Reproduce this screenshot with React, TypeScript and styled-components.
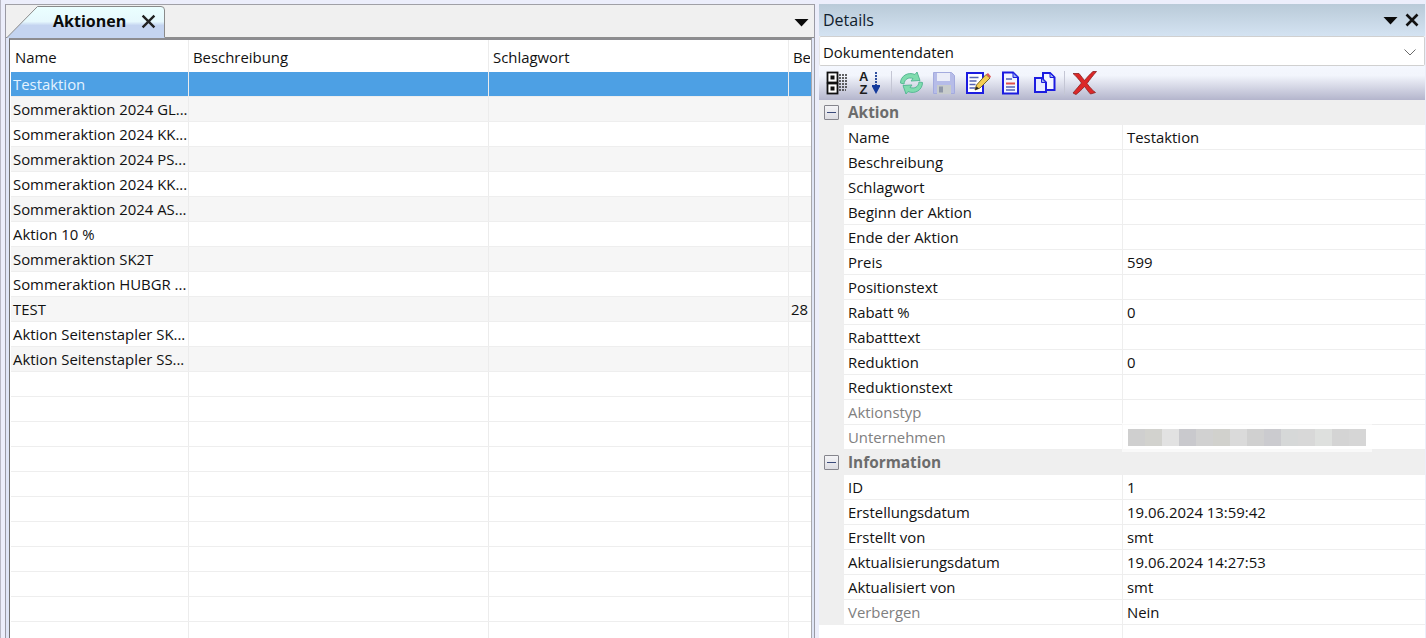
import React from "react";
import styled, { createGlobalStyle } from "styled-components";

const Global = createGlobalStyle`
  html, body { margin: 0; padding: 0; height: 100%; overflow: hidden; background: #eceefb; }
  #root { height: 638px; }
  * { box-sizing: border-box; }
`;

const FONT = `"Open Sans", "Noto Sans", "Liberation Sans", sans-serif`;

const Page = styled.div`
  width: 1426px;
  height: 638px;
  display: flex;
  overflow: hidden;
  padding: 4px 1px 0 0;
  font-family: ${FONT};
  font-size: 14.9px;
  color: #111;
  background: #eceefb;
  border-left: 1px solid #b8b8c4;
`;

const LeftOuter = styled.section`
  width: 810px;
  margin-left: 4px;
  flex: none;
  display: flex;
  flex-direction: column;
  border-top: 1px solid #a0a0a6;
  border-left: 1px solid #9a9aa4;
  border-right: 1px solid #9a9aa4;
  background: #dfe5f6;
`;

const TabStrip = styled.div`
  height: 33px;
  flex: none;
  display: flex;
  align-items: flex-end;
  justify-content: space-between;
  background: #f0f0f0;
  border-bottom: 1px solid #8e8e8e;
  padding: 0 5px 0 1px;
`;

const Tab = styled.div`
  position: relative;
  width: 158px;
  height: 33px;
  margin-bottom: -1px;
  display: flex;
  align-items: center;
  gap: 15px;
  padding: 0 0 1px 46px;
  font-size: 16px;
  font-weight: 700;
  color: #0b0b0b;
`;

const TabShape = styled.svg`
  position: absolute;
  inset: 0;
  z-index: 0;
`;

const TabLabel = styled.span`
  position: relative;
  z-index: 1;
`;

const TabClose = styled.svg`
  position: relative;
  z-index: 1;
  flex: none;
`;

const StripMenu = styled.svg`
  flex: none;
  margin-bottom: 10px;
`;

const GridFrame = styled.div`
  flex: 1;
  min-height: 0;
  margin: 0 2px 0 3px;
  padding-left: 1px;
  background: #fff;
  border-top: 2px solid #8c8c90;
  border-left: 1px solid #707070;
  border-right: 1px solid #a8a8ae;
  overflow: hidden;
`;

const Row = styled.div<{ $head?: boolean; $sel?: boolean; $alt?: boolean }>`
  display: grid;
  grid-template-columns: 178px 300px 300px 21px;
  height: ${(p) => (p.$head ? "32px" : "25px")};
  background: ${(p) => (p.$sel ? "#4da0e4" : p.$alt ? "#f6f6f6" : "#fff")};
  color: ${(p) => (p.$sel ? "#e4f3ff" : "#111")};
  border-bottom: ${(p) => (p.$head ? "none" : "1px solid #eeeeee")};
`;

const Cell = styled.div<{ $head?: boolean }>`
  display: flex;
  align-items: center;
  white-space: nowrap;
  overflow: hidden;
  padding-left: ${(p) => (p.$head ? "4px" : "2px")};
  padding-top: ${(p) => (p.$head ? "2px" : "0")};
  border-right: 1px solid #ececec;
  &:last-child { border-right: none; }
`;

const RightPanel = styled.section`
  width: 606px;
  margin-left: 4px;
  flex: none;
  display: flex;
  flex-direction: column;
  background: #fff;
`;

const TitleBar = styled.div`
  height: 32px;
  flex: none;
  display: flex;
  align-items: center;
  justify-content: space-between;
  padding: 0 6px 0 4px;
  font-size: 16px;
  color: #10202c;
  background: linear-gradient(#b9cad8, #d4e3f2);
`;

const TitleIcons = styled.div`
  display: flex;
  align-items: center;
  gap: 7px;
`;

const Combo = styled.div`
  height: 30px;
  flex: none;
  display: flex;
  align-items: center;
  justify-content: space-between;
  padding: 2px 8px 0 3px;
  background: #fff;
  border: 1px solid #d0d0d0;
  border-left-color: #e6e6e6;
  border-radius: 2px;
  color: #111;
`;

const Toolbar = styled.div`
  height: 34px;
  flex: none;
  display: flex;
  align-items: center;
  padding-left: 7px;
  background: linear-gradient(#f4f7fe 0, #f2f5fc 28%, #b4b5cc 100%);
`;

const ToolIcon = styled.svg<{ $gap?: number }>`
  flex: none;
  margin-right: ${(p) => p.$gap ?? 0}px;
`;

const ToolSep = styled.div<{ $gap: number }>`
  width: 1px;
  height: 24px;
  flex: none;
  background: #c4c6d4;
  margin-right: ${(p) => p.$gap}px;
`;

const PropList = styled.div`
  flex: 1;
  min-height: 0;
  position: relative;
  overflow: hidden;
  background: #fff;
`;

const CatRow = styled.div`
  height: 25px;
  display: flex;
  align-items: center;
  padding: 0 0 0 5px;
  gap: 9px;
  background: #efefef;
  font-weight: 700;
  font-size: 15.4px;
  color: #6c6c6c;
`;

const CatLabel = styled.span`
  margin-top: -1px;
`;

const Toggle = styled.span`
  width: 15px;
  height: 15px;
  flex: none;
  display: flex;
  align-items: center;
  justify-content: center;
  border: 1px solid #85858c;
  border-radius: 1px;
  background: linear-gradient(#f4f4f6, #dcdce2);
  &::before {
    content: "";
    width: 9px;
    height: 1px;
    background: #3a4a7a;
  }
`;

const PropRow = styled.div`
  height: 25px;
  display: grid;
  grid-template-columns: 25px 279px 1fr;
`;

const Margin = styled.div`
  background: #efefef;
`;

const PropName = styled.div<{ $off?: boolean }>`
  display: flex;
  align-items: center;
  padding-left: 4px;
  white-space: nowrap;
  color: ${(p) => (p.$off ? "#808080" : "#111")};
  border-bottom: 1px solid #eeeeee;
  border-right: 1px solid #eeeeee;
`;

const PropValue = styled.div`
  display: flex;
  align-items: center;
  padding-left: 4px;
  white-space: nowrap;
  border-bottom: 1px solid #eeeeee;
`;

const Filler = styled.div`
  height: 20px;
  margin-left: 303px;
  border-left: 1px solid #eeeeee;
`;

const Blur = styled.div`
  position: relative;
  display: flex;
  height: 17px;
  margin: 1px 0 0 1px;
  box-shadow: 0 0 0 6px rgba(255, 255, 255, 0.6);
`;

const Pixel = styled.span<{ $c: string }>`
  width: 17px;
  height: 17px;
  flex: none;
  background: ${(p) => p.$c};
`;

const rows = [
  "Testaktion",
  "Sommeraktion 2024 GL...",
  "Sommeraktion 2024 KK...",
  "Sommeraktion 2024 PS...",
  "Sommeraktion 2024 KK...",
  "Sommeraktion 2024 AS...",
  "Aktion 10 %",
  "Sommeraktion SK2T",
  "Sommeraktion HUBGR ...",
  "TEST",
  "Aktion Seitenstapler SK...",
  "Aktion Seitenstapler SS...",
];

const pixels = ["#cfcfcf", "#d2d2ce", "#e2e2e2", "#c9c9cd", "#d1d1d1", "#d1d1cd", "#dadada", "#d0d0d0", "#cbcbcf", "#d6d8d8", "#d8d8d8", "#dee0de", "#d4d4d4", "#d6d6d6"];

type Prop = { n: string; v?: string; off?: boolean; blur?: boolean };
const aktion: Prop[] = [
  { n: "Name", v: "Testaktion" },
  { n: "Beschreibung" },
  { n: "Schlagwort" },
  { n: "Beginn der Aktion" },
  { n: "Ende der Aktion" },
  { n: "Preis", v: "599" },
  { n: "Positionstext" },
  { n: "Rabatt %", v: "0" },
  { n: "Rabatttext" },
  { n: "Reduktion", v: "0" },
  { n: "Reduktionstext" },
  { n: "Aktionstyp", off: true },
  { n: "Unternehmen", off: true, blur: true },
];
const info: Prop[] = [
  { n: "ID", v: "1" },
  { n: "Erstellungsdatum", v: "19.06.2024 13:59:42" },
  { n: "Erstellt von", v: "smt" },
  { n: "Aktualisierungsdatum", v: "19.06.2024 14:27:53" },
  { n: "Aktualisiert von", v: "smt" },
  { n: "Verbergen", v: "Nein", off: true },
];

const Props = ({ items }: { items: Prop[] }) => (
  <>
    {items.map((p) => (
      <PropRow key={p.n}>
        <Margin />
        <PropName $off={p.off}>{p.n}</PropName>
        <PropValue>
          {p.blur ? (
            <Blur>
              {pixels.map((c, i) => (
                <Pixel key={i} $c={c} />
              ))}
            </Blur>
          ) : (
            p.v
          )}
        </PropValue>
      </PropRow>
    ))}
  </>
);

const MenuArrow = () => (
  <svg width="15" height="9" viewBox="0 0 14 9">
    <path d="M0 1h14L7 8.500z" fill="#0a0a0a" />
  </svg>
);

const CloseX = () => (
  <svg width="14" height="14" viewBox="0 0 14 14">
    <path d="M1.500 1.500l11 11M12.500 1.500l-11 11" stroke="#111" strokeWidth="2.600" fill="none" />
  </svg>
);

const Categorized = () => (
  <ToolIcon $gap={10} width="23" height="24" viewBox="0 0 23 24">
    <rect x="1.500" y="1.500" width="10" height="10" fill="#fff" stroke="#111" strokeWidth="1.800" />
    <rect x="1.500" y="12.500" width="10" height="10" fill="#fff" stroke="#111" strokeWidth="1.800" />
    <rect x="4.500" y="4.500" width="4" height="4" fill="#111" />
    <rect x="4.500" y="15.500" width="4" height="4" fill="#111" />
    <path d="M13 4h9M13 7h9M13 10h8M13 13h9M13 16h8M13 19h7" stroke="#333" strokeWidth="1.500" strokeDasharray="2 1" />
  </ToolIcon>
);

const AZ = () => (
  <ToolIcon $gap={9} width="23" height="28" viewBox="0 -2 23 28">
    <text x="0" y="10" fontFamily="Liberation Sans, sans-serif" fontWeight="700" fontSize="13" fill="#1c1c1c">A</text>
    <text x="0.500" y="23" fontFamily="Liberation Sans, sans-serif" fontWeight="700" fontSize="13" fill="#1c1c1c">Z</text>
    <path d="M17 1v14" stroke="#1c3f94" strokeWidth="1.800" strokeDasharray="2 1" />
    <path d="M13 14h8v1.500L17 23 13 15.500z" fill="#143a9c" />
  </ToolIcon>
);

const Refresh = () => (
  <ToolIcon $gap={9} width="25" height="24" viewBox="0 0 25 24">
    <path d="M1.500 12C1.500 5 9 0.500 16 3.500l2-2.500 3 8.500-9 .5 2-2.500c-4.500-1.500-8.500 .5-9 5.500z" fill="#7fdcae" stroke="#58b896" strokeWidth="1" />
    <path d="M23.500 11.500C23.500 19 16 23.500 9 20.500L7 23l-3-8.500 9-.5-2 2.500c4.500 1.500 8.500-.5 9-5.500z" fill="#7fdcae" stroke="#58b896" strokeWidth="1" />
  </ToolIcon>
);

const Save = () => (
  <ToolIcon $gap={10} width="22" height="24" viewBox="0 0 22 24">
    <path d="M0.500 1.500h18l3 3v18H0.500z" fill="#b6bce8" stroke="#a4abde" />
    <rect x="4" y="2" width="13" height="8" fill="#ebedf8" />
    <rect x="4" y="14" width="14" height="9" fill="#c8cccc" />
    <rect x="6" y="15.500" width="4" height="6" fill="#8f97a8" />
  </ToolIcon>
);

const Edit = () => (
  <ToolIcon $gap={9} width="26" height="24" viewBox="0 0 26 24">
    <path d="M2 2h16v20H2z" fill="#fff" stroke="#1c1ce0" strokeWidth="2" />
    <path d="M4.500 6.500h9M4.500 10h7M4.500 13.500h6M4.500 17h9" stroke="#5464b4" strokeWidth="1.500" />
    <path d="M10 19l1.500-5L21 3.500l4 3.500-10 10z" fill="#f4cd52" stroke="#6a5a20" strokeWidth="0.900" />
    <path d="M21 3.500l4 3.500 1-1.500-3-3.500z" fill="#dc5858" />
    <path d="M10 19l1.500-3.500 2.500 2z" fill="#222" />
  </ToolIcon>
);

const Doc = () => (
  <ToolIcon $gap={13} width="20" height="24" viewBox="0 0 20 24">
    <path d="M3 1.500h10l5 5V22.500H3z" fill="#f4f6ff" stroke="#1c1ce0" strokeWidth="2" />
    <path d="M13 1.500v5h5z" fill="#9db4f0" stroke="#1c1ce0" />
    <path d="M6 8h6M6 16h9M6 19h9" stroke="#5464b4" strokeWidth="1.500" />
    <path d="M6 12.500h9" stroke="#e0504a" strokeWidth="2" />
  </ToolIcon>
);

const Copies = () => (
  <ToolIcon $gap={8} width="23" height="24" viewBox="0 0 23 24">
    <path d="M10 2h7l4.500 4.500V19H10z" fill="#f4f6ff" stroke="#1c1ce0" strokeWidth="2" />
    <path d="M2 7h6.500l4.500 4.500V21H2z" fill="#e6ebff" stroke="#1c1ce0" strokeWidth="2" />
    <path d="M8.500 7v4.500H13z" fill="#9db4f0" stroke="#1c1ce0" />
    <path d="M17 2v4.500h4.500z" fill="#9db4f0" stroke="#1c1ce0" />
  </ToolIcon>
);

const Delete = () => (
  <ToolIcon width="25" height="24" viewBox="0 0 25 24">
    <path d="M1 2.500h6c2 2.500 4 5 5.500 7C15 6.500 18 3 21 0.500h3.500C21 4.500 17.500 9 15 12.500c2.500 3.500 5.500 7 8.500 9l-5 1.500c-2-2-4-5-6-7.500C9.500 19 6.500 21.500 4 23.500L1 22c3-3.500 6-7 8.500-10C7 8.500 4 5 1 2.500z" fill="#dc2828" stroke="#8c2020" strokeWidth="0.800" />
  </ToolIcon>
);

export default function App() {
  return (
    <Page>
      <Global />
      <LeftOuter>
        <TabStrip>
          <Tab>
            <TabShape width="158" height="33" viewBox="0 0 158 33">
              <defs>
                <linearGradient id="tabfill" x1="0" y1="0" x2="0" y2="1">
                  <stop offset="0" stopColor="#ebffff" />
                  <stop offset="0.48" stopColor="#e6f8fd" />
                  <stop offset="0.6" stopColor="#c4d4f0" />
                  <stop offset="1" stopColor="#c4d4f0" />
                </linearGradient>
              </defs>
              <path d="M0.500 32L30.500 1.500H154Q157.500 1.500 157.500 5V33H0.500z" fill="url(#tabfill)" />
              <path d="M0.500 32L30.500 1.500H154Q157.500 1.500 157.500 5V32" fill="none" stroke="#8a8a8a" />
            </TabShape>
            <TabLabel>Aktionen</TabLabel>
            <TabClose width="15" height="15" viewBox="0 0 14 14">
              <path d="M1.500 1.500l11 11M12.500 1.500l-11 11" stroke="#222" strokeWidth="2.200" fill="none" />
            </TabClose>
          </Tab>
          <StripMenu width="15" height="9" viewBox="0 0 14 9">
            <path d="M0 1h14L7 8.500z" fill="#0a0a0a" />
          </StripMenu>
        </TabStrip>
        <GridFrame>
          <Row $head>
            <Cell $head>Name</Cell>
            <Cell $head>Beschreibung</Cell>
            <Cell $head>Schlagwort</Cell>
            <Cell $head>Be</Cell>
          </Row>
          {rows.map((r, i) => (
            <Row key={i} $sel={i === 0} $alt={i % 2 === 1}>
              <Cell>{r}</Cell>
              <Cell />
              <Cell />
              <Cell>{r === "TEST" ? "28" : ""}</Cell>
            </Row>
          ))}
          {Array.from({ length: 11 }).map((_, i) => (
            <Row key={"e" + i}>
              <Cell />
              <Cell />
              <Cell />
              <Cell />
            </Row>
          ))}
        </GridFrame>
      </LeftOuter>
      <RightPanel>
        <TitleBar>
          Details
          <TitleIcons>
            <MenuArrow />
            <CloseX />
          </TitleIcons>
        </TitleBar>
        <Combo>
          Dokumentendaten
          <svg width="12" height="7" viewBox="0 0 12 7">
            <path d="M0.500 0.500L6 6l5.500-5.500" stroke="#6a6a6a" fill="none" />
          </svg>
        </Combo>
        <Toolbar>
          <Categorized />
          <AZ />
          <ToolSep $gap={7} />
          <Refresh />
          <Save />
          <Edit />
          <Doc />
          <Copies />
          <ToolSep $gap={7} />
          <Delete />
        </Toolbar>
        <PropList>
          <CatRow>
            <Toggle />
            <CatLabel>Aktion</CatLabel>
          </CatRow>
          <Props items={aktion} />
          <CatRow>
            <Toggle />
            <CatLabel>Information</CatLabel>
          </CatRow>
          <Props items={info} />
          <Filler />
        </PropList>
      </RightPanel>
    </Page>
  );
}
